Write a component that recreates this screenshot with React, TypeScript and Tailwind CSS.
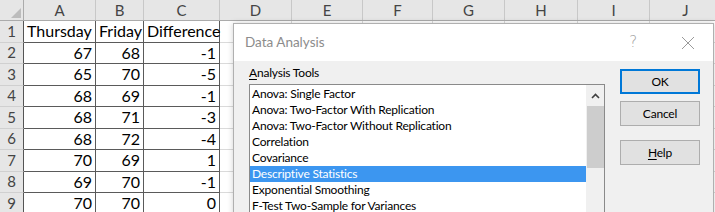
import React from "react";

const colHeaders = ["A", "B", "C", "D", "E", "F", "G", "H", "I", "J"];
const colWidths = [72, 48, 76, 72, 71, 70, 72, 73, 72, 72];

const data: string[][] = [
  ["Thursday", "Friday", "Difference"],
  ["67", "68", "-1"],
  ["65", "70", "-5"],
  ["68", "69", "-1"],
  ["68", "71", "-3"],
  ["68", "72", "-4"],
  ["70", "69", "1"],
  ["69", "70", "-1"],
  ["70", "70", "0"],
];

const tools = [
  "Anova: Single Factor",
  "Anova: Two-Factor With Replication",
  "Anova: Two-Factor Without Replication",
  "Correlation",
  "Covariance",
  "Descriptive Statistics",
  "Exponential Smoothing",
  "F-Test Two-Sample for Variances",
];

function Sheet() {
  return (
    <div className="flex flex-col font-['Lato',sans-serif] text-[16px] text-black">
      <div className="flex h-[21px] bg-[#e6e6e6] border-b border-[#ababab]">
        <div className="relative w-[24px] shrink-0 border-r border-[#ababab]">
          <div className="absolute right-[2px] bottom-[2px] w-0 h-0 border-l-[10px] border-l-transparent border-b-[10px] border-b-[#bcbcbc]" />
        </div>
        {colHeaders.map((c, i) => (
          <div
            key={c}
            style={{ width: colWidths[i] }}
            className="shrink-0 flex items-center justify-center border-r border-[#c8c8c8] text-[#444] text-[15px] leading-none"
          >
            {c}
          </div>
        ))}
      </div>
      {data.map((row, r) => (
        <div key={r} className="flex h-[21.5px]">
          <div className="w-[24px] shrink-0 flex items-center justify-center bg-[#e6e6e6] border-r border-[#555] border-b border-b-[#d0d0d0] text-[#444] text-[15px] leading-none">
            {r + 1}
          </div>
          {row.map((v, i) => (
            <div
              key={i}
              style={{ width: colWidths[i] }}
              className={
                "shrink-0 flex items-center border-r border-b border-[#5a5a5a] leading-none " +
                (r === 0 ? "justify-start pl-[3px]" : "justify-end pr-[3px]")
              }
            >
              {v}
            </div>
          ))}
          {colWidths.slice(3).map((w, i) => (
            <div
              key={"e" + i}
              style={{ width: w }}
              className="shrink-0 border-r border-b border-[#dadada]"
            />
          ))}
        </div>
      ))}
    </div>
  );
}

function Dialog() {
  return (
    <div className="absolute left-[233px] top-[23px] w-[481px] h-[200px] border border-[#b0b0b0] shadow-[0_0_6px_rgba(0,0,0,0.18)] flex flex-col font-['Lato',sans-serif] text-[12px] tracking-[-0.2px] text-black overflow-hidden">
      <div className="h-[37px] shrink-0 bg-white flex items-center pl-[11px] pr-[18px]">
        <span className="text-[#8c8c8c] text-[13.5px] tracking-normal">Data Analysis</span>
        <span className="ml-auto text-[#a0a0a0] text-[15px] font-['DejaVu_Sans',sans-serif] font-light mr-[44px]">?</span>
        <svg width="14" height="14" viewBox="0 0 14 14" className="mt-[1px]">
          <path d="M1 1 L13 13 M13 1 L1 13" stroke="#9a9a9a" strokeWidth="1" fill="none" />
        </svg>
      </div>
      <div className="flex-1 bg-[#f0f0f0] flex pl-[15px] pt-[4px]">
        <div className="flex flex-col">
          <div className="h-[15px] leading-[15px] mb-[4px]">
            <span className="underline underline-offset-2">A</span>nalysis Tools
          </div>
          <div className="w-[356px] h-[140px] bg-white border border-[#8a8a8a] flex">
            <div className="flex-1 pt-[1px]">
              {tools.map((t, i) => (
                <div
                  key={t}
                  className={
                    "h-[16px] leading-[16px] pl-[2px] whitespace-nowrap " +
                    (i === 5 ? "bg-[#3c96f0] text-white" : "")
                  }
                >
                  {t}
                </div>
              ))}
            </div>
            <div className="w-[18px] shrink-0 bg-[#f0f0f0] flex flex-col items-center">
              <div className="h-[21px] flex items-center justify-center">
                <svg width="9" height="6" viewBox="0 0 9 6">
                  <path d="M1 5 L4.5 1.5 L8 5" stroke="#404040" strokeWidth="1.6" fill="none" />
                </svg>
              </div>
              <div className="w-[17px] h-[62px] bg-[#cdcdcd]" />
            </div>
          </div>
        </div>
        <div className="flex flex-col ml-[15px] mt-[4px]">
          <button className="w-[80px] h-[25px] bg-[#e1e1e1] border-2 border-[#0078d7] flex items-center justify-center">
            OK
          </button>
          <button className="w-[80px] h-[25px] mt-[7px] bg-[#e1e1e1] border border-[#adadad] flex items-center justify-center">
            Cancel
          </button>
          <button className="w-[80px] h-[25px] mt-[14px] bg-[#e1e1e1] border border-[#adadad] flex items-center justify-center">
            <span>
              <span className="underline underline-offset-2">H</span>elp
            </span>
          </button>
        </div>
      </div>
    </div>
  );
}

export default function App() {
  return (
    <div className="relative w-[715px] h-[212px] overflow-hidden bg-white">
      <Sheet />
      <Dialog />
    </div>
  );
}
